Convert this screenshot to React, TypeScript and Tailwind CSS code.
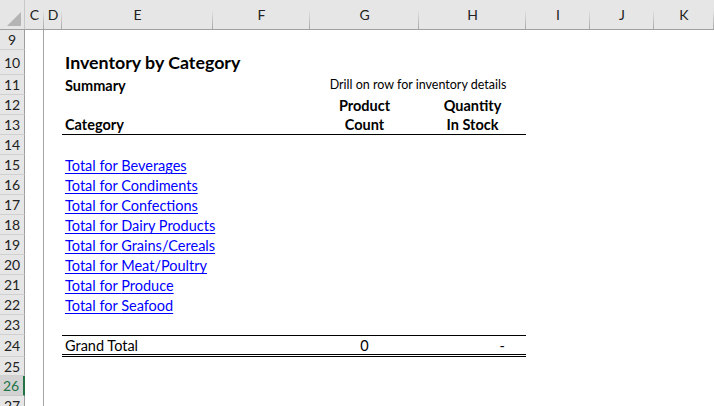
import React from 'react';

// Column template: row header, C, D, E, F, G, H, I, J, K
const COLS =
  'grid grid-cols-[25px_19px_18px_151px_97px_109px_107px_64px_64px_1fr] grid-rows-[minmax(0,1fr)] leading-[17px]';
const FONT = "font-['Lato','Open_Sans',sans-serif]";

const HEADERS = ['C', 'D', 'E', 'F', 'G', 'H', 'I', 'J', 'K'];

const CATEGORIES = [
  'Beverages',
  'Condiments',
  'Confections',
  'Dairy Products',
  'Grains/Cereals',
  'Meat/Poultry',
  'Produce',
  'Seafood',
];

type Cells = {
  e?: React.ReactNode;
  g?: React.ReactNode;
  h?: React.ReactNode;
  gh?: React.ReactNode; // centered across G:H
  lineBottom?: boolean;
  total?: boolean;
};

const RowHeader = ({ n, selected }: { n: number; selected?: boolean }) => (
  <div
    className={
      selected
        ? 'flex items-center justify-center border-b border-[#c8c8c8] border-r-2 border-r-[#217346] bg-[#d2d2d2] text-[#217346] text-[14px] pr-[1px]'
        : 'flex items-center justify-center border-b border-[#d0d0d0] border-r border-r-[#9e9e9e] bg-[#e6e6e6] text-[#222] text-[14px]'
    }
  >
    {n}
  </div>
);

const Row = ({ n, h = 20, cells = {}, selected }: { n: number; h?: number; cells?: Cells; selected?: boolean }) => {
  const line = cells.lineBottom
    ? '[border-bottom:1px_solid_#000]'
    : cells.total
      ? '[border-top:1px_solid_#000] [border-bottom:3px_double_#000]'
      : '';
  const pad = cells.total ? 'pb-0' : 'pb-[1px]';
  return (
    <div className={`${COLS} shrink-0`} style={{ height: h }}>
      <RowHeader n={n} selected={selected} />
      <div className="border-r border-[#a6a6a6] bg-white" />
      <div className="bg-white" />
      <div className={`min-h-0 flex items-end pl-[3px] ${pad} bg-white whitespace-nowrap overflow-visible relative z-10 ${line}`}>
        {cells.e}
      </div>
      <div className={`min-h-0 bg-white ${line}`} />
      {cells.gh ? (
        <div className={`min-h-0 col-span-2 flex items-end justify-center pb-[2px] bg-white whitespace-nowrap ${line}`}>
          {cells.gh}
        </div>
      ) : (
        <>
          <div className={`min-h-0 flex items-end justify-center ${pad} bg-white whitespace-nowrap ${line}`}>{cells.g}</div>
          <div className={`min-h-0 flex items-end justify-center ${pad} bg-white whitespace-nowrap ${line}`}>{cells.h}</div>
        </>
      )}
      <div className="bg-white" />
      <div className="bg-white" />
      <div className="bg-white" />
    </div>
  );
};

const Link = ({ children }: { children: React.ReactNode }) => (
  <span className="text-[#0000ff] underline underline-offset-[2px] decoration-1 text-[14.5px]">{children}</span>
);

export default function App() {
  return (
    <div className={`w-[714px] h-[406px] overflow-hidden bg-white flex flex-col ${FONT} text-[14.5px] text-black`}>
      {/* Column headers */}
      <div className={`${COLS} h-[30px] shrink-0 bg-[#e6e6e6] border-b border-[#a0a0a0]`}>
        <div className="relative border-r border-[#c8c8c8]">
          <svg className="absolute right-[3px] bottom-[3px]" width="14" height="14" viewBox="0 0 14 14">
            <polygon points="14,0 14,14 0,14" fill="#b4b4b4" />
          </svg>
        </div>
        {HEADERS.map((c) => (
          <div key={c} className="relative flex items-end justify-center pb-[6px] text-[14px] text-[#222]">
            {c}
            <span className="absolute right-0 top-[10px] bottom-0 w-px bg-gradient-to-b from-[#e6e6e6] to-[#a8a8a8]" />
          </div>
        ))}
      </div>

      <Row n={9} />
      <Row n={10} h={25} cells={{ e: <span className="font-bold text-[17.8px] leading-none pb-[2px]">Inventory by Category</span> }} />
      <Row
        n={11}
        cells={{
          e: <span className="font-bold">Summary</span>,
          gh: <span className="text-[12.5px]">Drill on row for inventory details</span>,
        }}
      />
      <Row n={12} cells={{ g: <span className="font-bold">Product</span>, h: <span className="font-bold">Quantity</span> }} />
      <Row
        n={13}
        cells={{
          e: <span className="font-bold">Category</span>,
          g: <span className="font-bold">Count</span>,
          h: <span className="font-bold">In Stock</span>,
          lineBottom: true,
        }}
      />
      <Row n={14} />
      {CATEGORIES.map((c, i) => (
        <Row key={c} n={15 + i} cells={{ e: <Link>Total for {c}</Link> }} />
      ))}
      <Row n={23} />
      <Row
        n={24}
        h={22}
        cells={{
          e: <span>Grand Total</span>,
          g: <span>0</span>,
          h: <span className="ml-auto pr-[21px]">-</span>,
          total: true,
        }}
      />
      <Row n={25} h={19} />
      <Row n={26} selected />
      <Row n={27} />
    </div>
  );
}
